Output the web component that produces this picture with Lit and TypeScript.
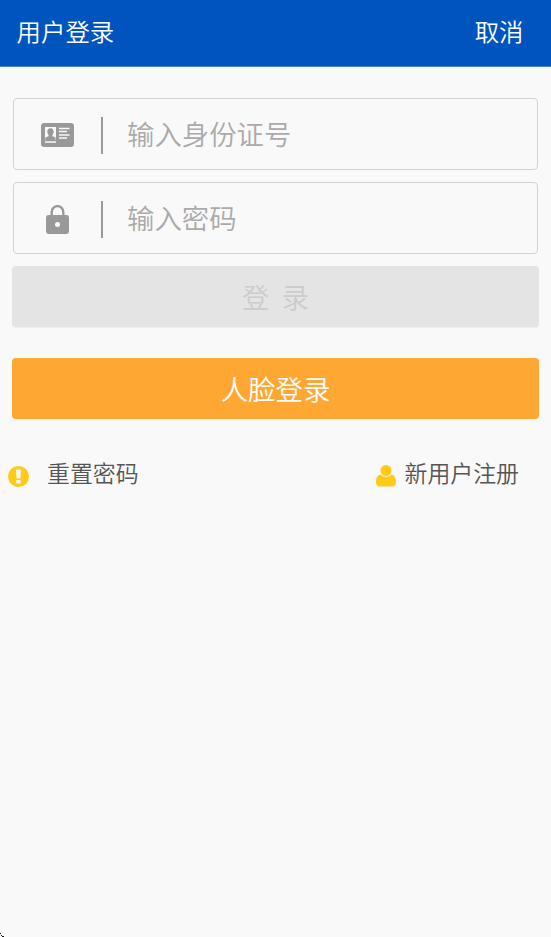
import { LitElement, html, css } from "lit";
import { customElement, property } from "lit/decorators.js";

const cardIcon = html`<svg width="33" height="24" viewBox="0 0 33 24">
  <rect width="33" height="24" rx="3.2" fill="#999" />
  <rect x="4" y="4" width="11" height="13" fill="#f9f9f9" />
  <path d="M9.5 5.2c2 0 3.2 1.4 3.2 3.4 0 1.5-.6 2.6-1.3 3.3v1.3l3.2 1.4V17H4.400v-2.400l3.200-1.400v-1.300c-.7-.7-1.300-1.800-1.300-3.300 0-2 1.200-3.400 3.200-3.400z" fill="#999" />
  <path d="M4 19h11M18 5.500h10.500M18 8.500h8M18 12h10.500M18 15h8" stroke="#f9f9f9" stroke-width="1.3" fill="none" />
</svg>`;

const lockIcon = html`<svg width="23" height="29" viewBox="0 0 23 29">
  <path d="M5.700 12V6.900a5.800 5.800 0 0 1 11.600 0V12" fill="none" stroke="#999" stroke-width="2.4" />
  <rect y="10" width="23" height="19" rx="2.4" fill="#999" />
  <circle cx="11.5" cy="19.500" r="2.500" fill="#f9f9f9" />
</svg>`;

const alertIcon = html`<svg width="21" height="21" viewBox="0 0 21 21">
  <circle cx="10.5" cy="10.5" r="10.5" fill="#ffcb19" />
  <path d="M8 3.600h5l-.6 9H8.600z" fill="#f9f9f9" />
  <rect x="8.300" y="14" width="4.400" height="3.600" rx=".5" fill="#f9f9f9" />
</svg>`;

const userIcon = html`<svg width="20" height="22" viewBox="0 0 20 22">
  <path d="M4.700 9.600C1.500 9.800 0 13 0 17.500 0 20.300 1.400 21.500 3.700 21.500h12.600c2.300 0 3.700-1.200 3.700-4 0-4.500-1.500-7.700-4.700-7.900C14 11 12 11.800 10 11.800S6 11 4.700 9.600z" fill="#ffcb19" />
  <circle cx="10" cy="5.500" r="5.500" fill="#ffcb19" />
</svg>`;

@customElement("login-field")
class LoginField extends LitElement {
  @property() placeholder = "";
  @property() type = "text";

  static styles = css`
    :host {
      display: flex;
      align-items: center;
      box-sizing: border-box;
      height: 72px;
      border: 1px solid #d2d2d2;
      border-radius: 4px;
    }
    .icon {
      width: 87px;
      display: flex;
      justify-content: center;
    }
    .divider {
      width: 1.5px;
      height: 37px;
      background: #999;
      margin-top: 2px;
    }
    .input {
      flex: 1;
      min-width: 0;
      height: 60px;
      margin-left: 24.5px;
      padding: 0 0 2px;
      box-sizing: border-box;
      border: 0;
      outline: 0;
      background: none;
      font: 350 27.4px "Noto Sans CJK SC", sans-serif;
      color: #555;
    }
    .input::placeholder {
      color: #aaa;
      opacity: 1;
    }
  `;

  render() {
    return html`
      <div class="icon"><slot></slot></div>
      <div class="divider"></div>
      <input class="input" type=${this.type} placeholder=${this.placeholder} />
    `;
  }
}

@customElement("app-root")
class AppRoot extends LitElement {
  static styles = css`
    :host {
      display: block;
      position: relative;
      height: 937px;
      overflow: hidden;
      background: #f9f9f9;
      font-family: "Noto Sans CJK SC", sans-serif;
      font-weight: 350;
    }
    svg {
      display: block;
      flex: none;
    }
    .bar {
      display: flex;
      justify-content: space-between;
      align-items: center;
      box-sizing: border-box;
      height: 67px;
      padding: 0 27.5px 5px 16.6px;
      background: #0054bd;
      border-bottom: 1px solid #4481ce;
      color: #fff;
      font-size: 24.4px;
      line-height: 36px;
    }
    .form {
      display: flex;
      flex-direction: column;
      gap: 12px;
      padding: 31px 13px 0;
    }
    .card {
      margin-top: 1px;
    }
    .lock {
      margin-top: 3px;
    }
    .button {
      display: block;
      height: 61px;
      margin: 0 -1px;
      padding: 0 0 1px;
      border: 0;
      border-radius: 4px;
      font: 350 27.4px "Noto Sans CJK SC", sans-serif;
      white-space: pre;
    }
    .submit {
      background: #e4e4e4;
      color: #ccc;
      box-shadow: 0 1px #efefef;
    }
    .face {
      margin-top: 19px;
      background: #ffa733;
      color: #fff;
    }
    .links {
      display: flex;
      justify-content: space-between;
      padding: 36px 32px 0 8px;
      color: #555;
      font-size: 22.9px;
      line-height: 34px;
    }
    .link {
      display: flex;
      align-items: center;
    }
    .reset {
      gap: 18px;
    }
    .register {
      gap: 9px;
    }
    .link svg {
      margin-top: 8px;
    }
    .corner {
      position: absolute;
      left: 0;
      bottom: 0;
    }
  `;

  render() {
    return html`
      <header class="bar"><span>用户登录</span><span>取消</span></header>
      <main>
        <div class="form">
          <login-field placeholder="输入身份证号"><span class="card">${cardIcon}</span></login-field>
          <login-field placeholder="输入密码" type="password"><span class="lock">${lockIcon}</span></login-field>
          <button class="button submit" disabled>登  录</button>
          <button class="button face">人脸登录</button>
        </div>
        <nav class="links">
          <span class="link reset">${alertIcon}重置密码</span>
          <span class="link register">${userIcon}新用户注册</span>
        </nav>
      </main>
      <svg class="corner" width="4" height="4" viewBox="0 0 4 4" shape-rendering="crispEdges">
        <path d="M0 0h1v1H0zM1 2h1v1H1zM2 3h2v1H2z" fill="#111" />
      </svg>
    `;
  }
}
